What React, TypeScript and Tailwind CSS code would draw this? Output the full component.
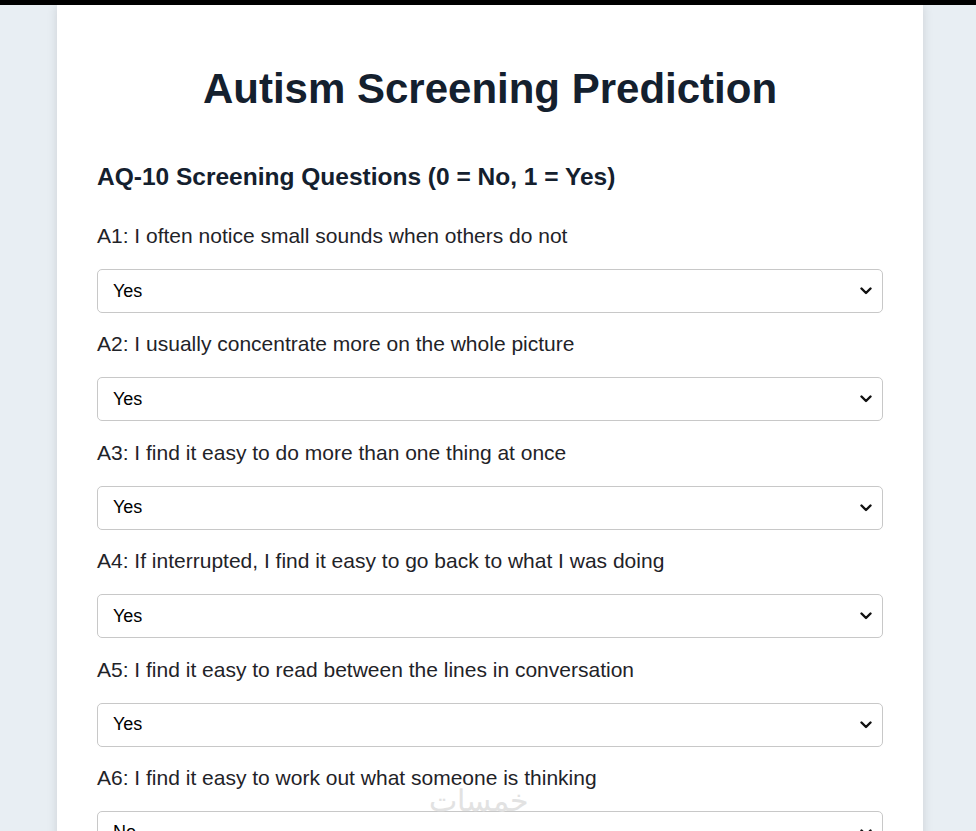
import React from 'react'

const questions = [
  'A1: I often notice small sounds when others do not',
  'A2: I usually concentrate more on the whole picture',
  'A3: I find it easy to do more than one thing at once',
  'A4: If interrupted, I find it easy to go back to what I was doing',
  'A5: I find it easy to read between the lines in conversation',
  'A6: I find it easy to work out what someone is thinking',
]

const answers = ['Yes', 'Yes', 'Yes', 'Yes', 'Yes', 'No']

function Chevron() {
  return (
    <svg
      className="pointer-events-none absolute right-[11px] top-1/2 -translate-y-1/2"
      width="12"
      height="8"
      viewBox="0 0 12 8"
    >
      <path d="M1.5 1.5 L6 6 L10.5 1.5" fill="none" stroke="#111" strokeWidth="2.4" strokeLinecap="round" strokeLinejoin="round" />
    </svg>
  )
}

function Question({ label, value }: { label: string; value: string }) {
  return (
    <div>
      <label className="block text-[21px] leading-[24px] text-[#1f2328] mb-[21px]">{label}</label>
      <div className="relative">
        <select
          defaultValue={value}
          className="block w-full h-[44px] appearance-none rounded-[5px] border border-[#c8c8c8] bg-white pl-[15px] text-[18px] text-black outline-none"
        >
          <option value="Yes">Yes</option>
          <option value="No">No</option>
        </select>
        <Chevron />
      </div>
    </div>
  )
}

export default function App() {
  return (
    <div className="min-h-screen bg-[#e8eef3] font-['Liberation_Sans',Arial,sans-serif] overflow-hidden">
      <div className="h-[5px] bg-black" />
      <div className="relative ml-[57px] w-[866px] bg-white px-[40px] pt-[60px] pb-10 shadow-[0_0_10px_rgba(0,0,0,0.12)]">
        <h1 className="text-center text-[42px] leading-[48px] font-bold text-[#14202e]">Autism Screening Prediction</h1>
        <h2 className="mt-[50px] text-[24.5px] leading-[28px] font-bold text-[#14202e]">AQ-10 Screening Questions (0 = No, 1 = Yes)</h2>
        <div className="mt-[33px] flex flex-col gap-[19.4px]">
          {questions.map((q, i) => (
            <Question key={i} label={q} value={answers[i]} />
          ))}
        </div>
        <div className="pointer-events-none absolute left-[372px] top-[772px] text-[30px] text-[#e2e2e2] font-['Noto_Sans',sans-serif]">
          خمسات
        </div>
      </div>
    </div>
  )
}
